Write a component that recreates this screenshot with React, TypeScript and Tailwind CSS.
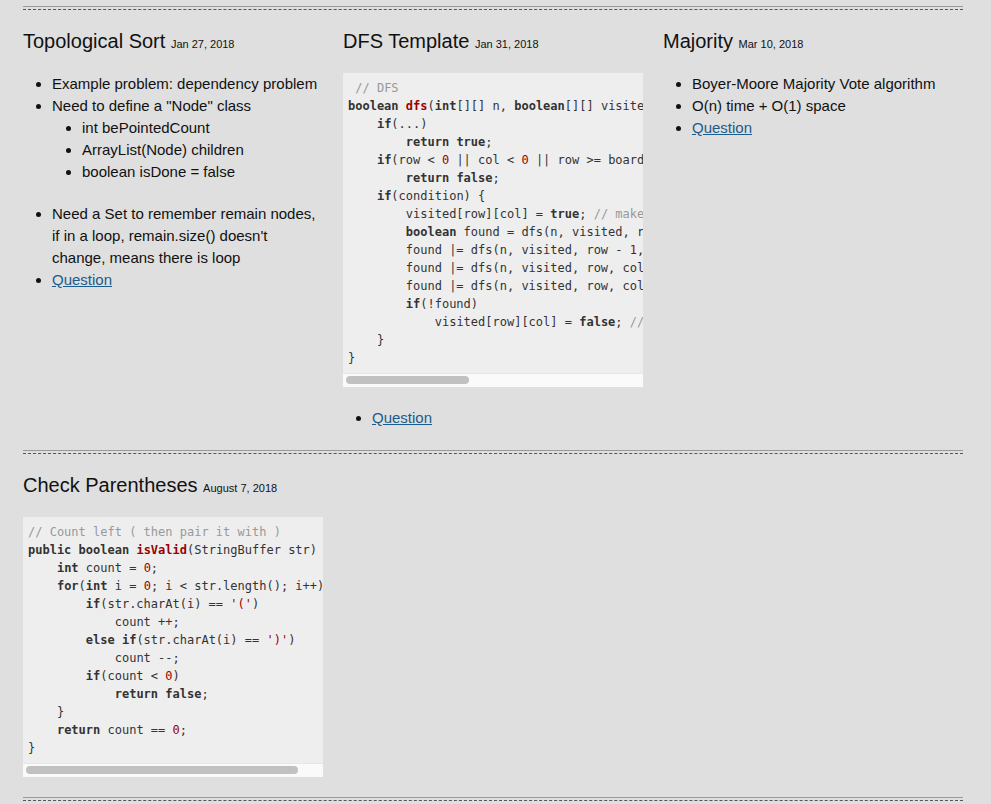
import type { ReactNode } from 'react';

const K = ({ children }: { children: ReactNode }) => <span className="font-bold">{children}</span>;
const F = ({ children }: { children: ReactNode }) => <span className="font-bold text-[#990000]">{children}</span>;
const N = ({ children }: { children: ReactNode }) => <span className="text-[#990000]">{children}</span>;
const C = ({ children }: { children: ReactNode }) => <span className="text-[#999]">{children}</span>;

function Separator() {
  return (
    <div className="border-t border-[#999]">
      <div className="mt-[2px] border-t border-dashed border-[#555]" />
    </div>
  );
}

function Title({ name, date }: { name: string; date: string }) {
  return (
    <h3 className="text-[20px] leading-[24px] text-[#111] mb-[17px]">
      {name} <span className="text-[11px] text-[#111]">{date}</span>
    </h3>
  );
}

function Code({ children, thumb }: { children: ReactNode; thumb: string }) {
  return (
    <div className="bg-[#eeeeee] overflow-hidden">
      <pre className="font-['DejaVu_Sans_Mono',monospace] text-[12px] leading-[18px] text-[#333] whitespace-pre px-[5px] pt-[6px] pb-[6px]">
        {children}
      </pre>
      <div className="h-[14px] bg-[#fafafa] border-t border-[#e6e6e6] pl-[3px] pt-[2px]">
        <div className={`h-[8px] rounded-full bg-[#c1c1c1] ${thumb}`} />
      </div>
    </div>
  );
}

function QuestionLink() {
  return <a href="#" className="text-[#1d5b8c] underline">Question</a>;
}

export default function App() {
  return (
    <div className="min-h-screen bg-[#dfdfdf] pt-[6px] font-['Liberation_Sans',Arial,sans-serif] text-[#111]">
      <div className="ml-[23px] w-[940px]">
        <Separator />
        <div className="grid grid-cols-3 gap-5 pt-[19px] pb-[21px]">
          <div>
            <Title name="Topological Sort" date="Jan 27, 2018" />
            <ul className="list-disc pl-[29px] text-[15px] leading-[22px]">
              <li>Example problem: dependency problem</li>
              <li>
                Need to define a "Node" class
                <ul className="list-disc pl-[30px] mb-5">
                  <li>int bePointedCount</li>
                  <li>ArrayList(Node) children</li>
                  <li>boolean isDone = false</li>
                </ul>
              </li>
              <li>Need a Set to remember remain nodes, if in a loop, remain.size() doesn't change, means there is loop</li>
              <li><QuestionLink /></li>
            </ul>
          </div>
          <div>
            <Title name="DFS Template" date="Jan 31, 2018" />
            <Code thumb="w-[123px]">
              {' '}<C>// DFS</C>{'\n'}
              <K>boolean</K> <F>dfs</F>(<K>int</K>[][] n, <K>boolean</K>[][] visited, <K>int</K> row, <K>int</K> col) {'{'}{'\n'}
              {'    '}<K>if</K>(...){'\n'}
              {'        '}<K>return</K> <K>true</K>;{'\n'}
              {'    '}<K>if</K>(row &lt; <N>0</N> || col &lt; <N>0</N> || row &gt;= board.length || col &gt;= board[<N>0</N>].length){'\n'}
              {'        '}<K>return</K> <K>false</K>;{'\n'}
              {'    '}<K>if</K>(condition) {'{'}{'\n'}
              {'        '}visited[row][col] = <K>true</K>; <C>// make it visited</C>{'\n'}
              {'        '}<K>boolean</K> found = dfs(n, visited, row + <N>1</N>, col);{'\n'}
              {'        '}found |= dfs(n, visited, row - <N>1</N>, col);{'\n'}
              {'        '}found |= dfs(n, visited, row, col + <N>1</N>);{'\n'}
              {'        '}found |= dfs(n, visited, row, col - <N>1</N>);{'\n'}
              {'        '}<K>if</K>(!found){'\n'}
              {'            '}visited[row][col] = <K>false</K>; <C>// backtrack</C>{'\n'}
              {'    '}{'}'}{'\n'}
              {'}'}
            </Code>
            <ul className="list-disc pl-[29px] text-[15px] leading-[22px] mt-5">
              <li><QuestionLink /></li>
            </ul>
          </div>
          <div>
            <Title name="Majority" date="Mar 10, 2018" />
            <ul className="list-disc pl-[29px] text-[15px] leading-[22px]">
              <li>Boyer-Moore Majority Vote algorithm</li>
              <li>O(n) time + O(1) space</li>
              <li><QuestionLink /></li>
            </ul>
          </div>
        </div>
        <Separator />
        <div className="grid grid-cols-3 gap-5 pt-[19px] pb-[20px]">
          <div>
            <Title name="Check Parentheses" date="August 7, 2018" />
            <Code thumb="w-[272px]">
              <C>// Count left ( then pair it with )</C>{'\n'}
              <K>public</K> <K>boolean</K> <F>isValid</F>(StringBuffer str) {'{'}{'\n'}
              {'    '}<K>int</K> count = <N>0</N>;{'\n'}
              {'    '}<K>for</K>(<K>int</K> i = <N>0</N>; i &lt; str.length(); i++) {'{'}{'\n'}
              {'        '}<K>if</K>(str.charAt(i) == <N>'('</N>){'\n'}
              {'            '}count ++;{'\n'}
              {'        '}<K>else</K> <K>if</K>(str.charAt(i) == <N>')'</N>){'\n'}
              {'            '}count --;{'\n'}
              {'        '}<K>if</K>(count &lt; <N>0</N>){'\n'}
              {'            '}<K>return</K> <K>false</K>;{'\n'}
              {'    '}{'}'}{'\n'}
              {'    '}<K>return</K> count == <N>0</N>;{'\n'}
              {'}'}
            </Code>
          </div>
          <div />
          <div />
        </div>
        <Separator />
      </div>
    </div>
  );
}
